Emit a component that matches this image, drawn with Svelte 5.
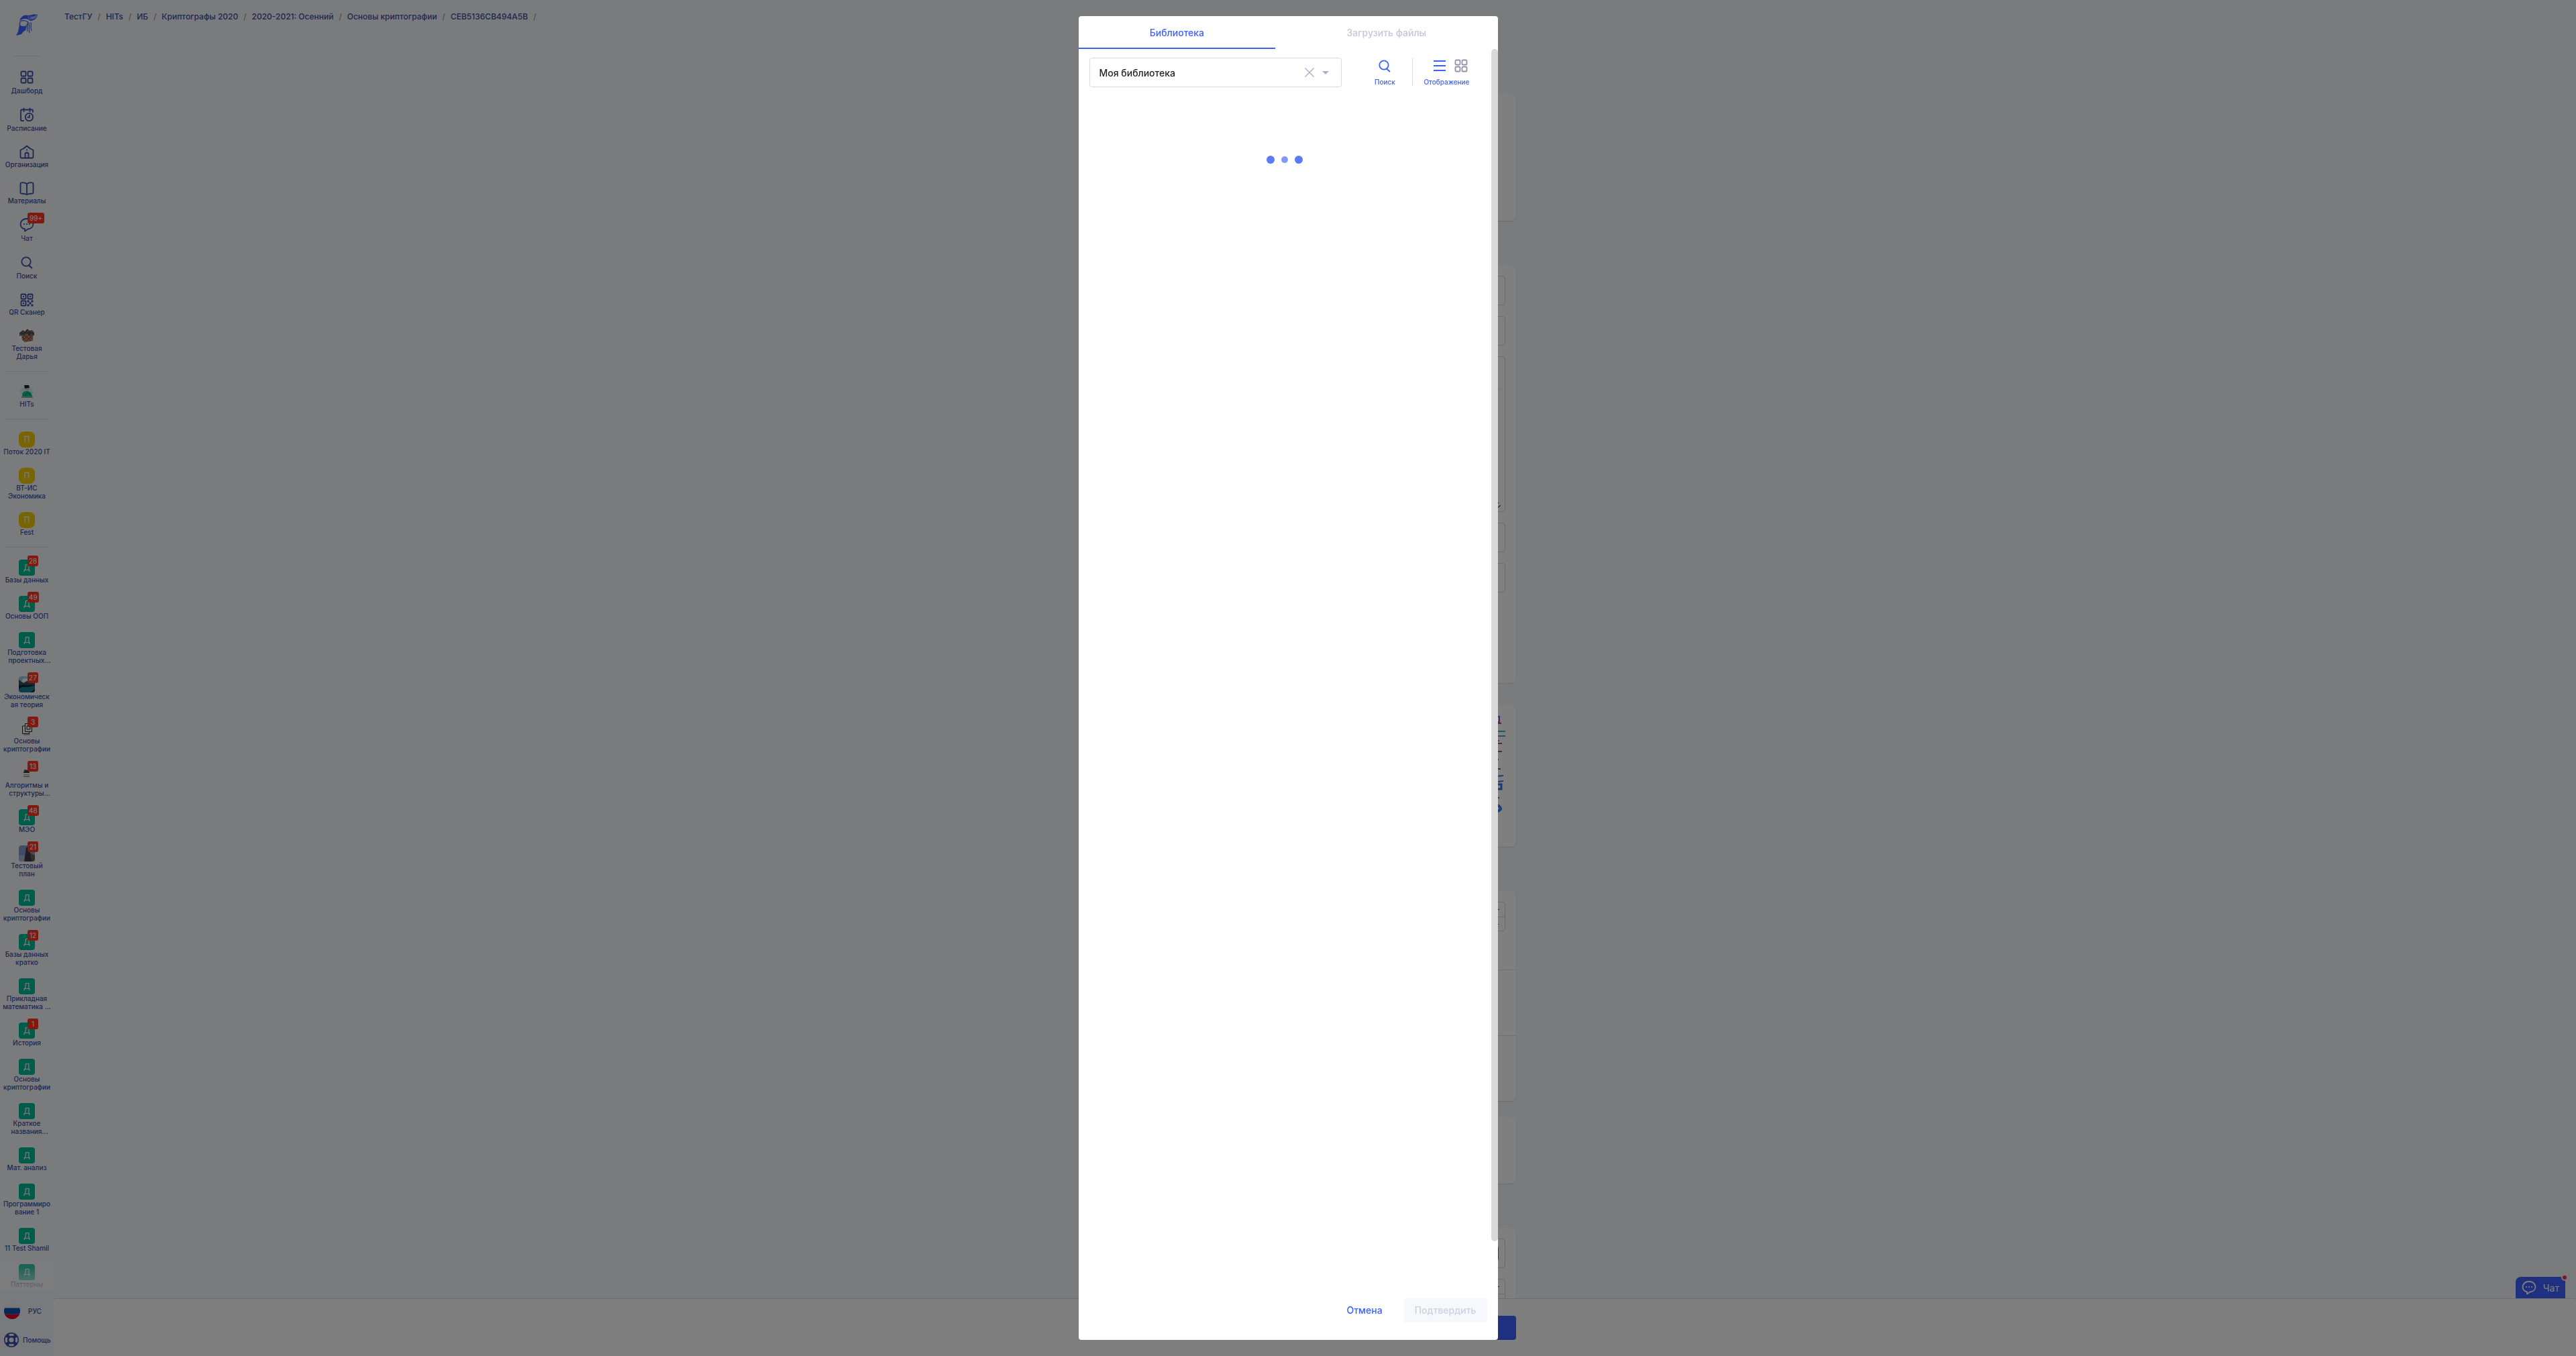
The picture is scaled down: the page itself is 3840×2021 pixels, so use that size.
<script>
  const crumbs = ['ТестГУ', 'HITs', 'ИБ', 'Криптографы 2020', '2020-2021: Осенний', 'Основы криптографии', 'CEB5136CB494A5B'];

  const menu = [
    { icon: 'grid', label: 'Дашборд', tall: true },
    { icon: 'calendar', label: 'Расписание', tall: true },
    { icon: 'home', label: 'Организация' },
    { icon: 'book', label: 'Материалы' },
    { icon: 'chat', label: 'Чат', badge: '99+', tall: true },
    { icon: 'search', label: 'Поиск', tall: true },
    { icon: 'qr', label: 'QR Сканер' },
    { icon: 'basket', label: 'Тестовая Дарья' }
  ];
  const orgs = [{ icon: 'person', label: 'HITs' }];
  const streams = [
    { letter: 'П', label: 'Поток 2020 IT' },
    { letter: 'П', label: 'ВТ-ИС Экономика' },
    { letter: 'П', label: 'Fest' }
  ];
  const courses = [
    { letter: 'Д', label: 'Базы данных', badge: '28' },
    { letter: 'Д', label: 'Основы ООП', badge: '49' },
    { letter: 'Д', label: 'Подготовка проектных', more: true },
    { icon: 'lake', label: 'Экономическая теория', badge: '27' },
    { icon: 'squares', label: 'Основы криптографии', badge: '3' },
    { icon: 'robot', label: 'Алгоритмы и структуры', more: true, badge: '13' },
    { letter: 'Д', label: 'МЭО', badge: '48' },
    { icon: 'tower', label: 'Тестовый план', badge: '21' },
    { letter: 'Д', label: 'Основы криптографии' },
    { letter: 'Д', label: 'Базы данных кратко', badge: '12' },
    { letter: 'Д', label: 'Прикладная математика\u00a0...' },
    { letter: 'Д', label: 'История', badge: '1' },
    { letter: 'Д', label: 'Основы криптографии' },
    { letter: 'Д', label: 'Краткое названия', more: true },
    { letter: 'Д', label: 'Мат. анализ' },
    { letter: 'Д', label: 'Программирование 1' },
    { letter: 'Д', label: '11 Test Shamil' },
    { letter: 'Д', label: 'Паттерны' }
  ];
  const groups = [
    { kind: 'plain', items: menu },
    { kind: 'plain', items: orgs },
    { kind: 'stream', items: streams },
    { kind: 'course', items: courses }
  ];
</script>

{#snippet icon(name)}
  {#if name === 'grid'}
    <svg class="line" width="20" height="20" viewBox="0 0 20 20"><rect x="1.5" y="1.5" width="7" height="7" rx="1.6" /><rect x="11.5" y="1.5" width="7" height="7" rx="1.6" /><rect x="1.5" y="11.5" width="7" height="7" rx="1.6" /><rect x="11.5" y="11.5" width="7" height="7" rx="1.6" /></svg>
  {:else if name === 'calendar'}
    <svg class="line" width="22" height="22" viewBox="0 0 22 22"><path d="M6 20H3.5A1.5 1.5 0 0 1 2 18.500V5a1.500 1.500 0 0 1 1.500-1.500h15A1.500 1.500 0 0 1 20 5v2M6.500 1.500v4.500M15.500 1.500v4.500" /><circle cx="14.500" cy="14.500" r="5.700" /><path d="M14.800 11.800v3h-2.500" /></svg>
  {:else if name === 'home'}
    <svg class="line" width="22" height="22" viewBox="0 0 22 22"><path d="M1.500 7.500 6 5.500l5-4 5 4 4.500 2V18a1.500 1.500 0 0 1-1.500 1.500H3A1.500 1.500 0 0 1 1.500 18ZM8.500 19v-5a2.500 2.500 0 0 1 5 0v5M10.800 7.500h.4" /></svg>
  {:else if name === 'book'}
    <svg class="line" width="22" height="22" viewBox="0 0 22 22"><path d="M11 4C8 2 4.500 2 3 2.300a1.500 1.500 0 0 0-1.500 1.500V17a1.500 1.500 0 0 0 1.500 1.500c3 0 5.500.3 8 1.500 2.500-1.200 5-1.500 8-1.500a1.500 1.500 0 0 0 1.500-1.500V3.800A1.500 1.500 0 0 0 19 2.300C17.500 2 14 2 11 4Zm0 0v16" /></svg>
  {:else if name === 'chat'}
    <svg class="line" width="22" height="22" viewBox="0 0 22 22"><path d="M8 17.300C4 16.500 1.500 13.500 1.500 10c0-4.700 4-8 9.500-8s9.500 3.300 9.500 8c0 4.200-3.600 7-8 7.500L8 20.500Z" /><path class="dots" d="M7 10h.1M11 10h.1M15 10h.1" /></svg>
  {:else if name === 'search'}
    <svg class="line" width="20" height="20" viewBox="0 0 20 20"><circle cx="9" cy="9" r="6.700" /><path d="m13 14.500 4.500 4" /></svg>
  {:else if name === 'qr'}
    <svg class="line" width="20" height="20" viewBox="0 0 20 20"><rect x="1.500" y="1.500" width="7" height="7" rx="1" /><rect x="11.500" y="1.500" width="7" height="7" rx="1" /><rect x="1.500" y="11.500" width="7" height="7" rx="1" /><path class="solid" d="M4 4h2v2H4zM14 4h2v2h-2zM4 14h2v2H4zM10.500 10.500h3v3h-3zM16.500 10.500h3v3h-3zM13.500 13.500h3v3h-3zM10.500 16.500h3v3h-3zM16.500 16.500h3v3h-3z" /></svg>
  {:else if name === 'basket'}
    <svg width="24" height="24" viewBox="0 0 24 24"><circle cx="12" cy="12" r="12" fill="#fff" /><path d="M4 10h18l-1 9-12 2-4-3Z" fill="#b98566" /><path d="m5 13 7 7m-3-9 9 8m-3-9 5 6M20 11l-9 9m4-10-9 8m3-8-4 5" stroke="#6b422d" /><path d="M1 7 6 3l3 2 4-4 3 3 4-1 3 4v4l-3-1-4 1-4-2-4 1-4 1-3 1Z" fill="#3f5b44" /><path d="M1 10h3M5 6h2m5-1h3m3 0h3m-3 4h2m-11 0h3" stroke="#b0507f" stroke-width="2" /></svg>
  {:else if name === 'person'}
    <svg width="24" height="24" viewBox="0 0 24 24"><path d="M3 8c3-5 15-6 18 2 1 5-2 8-6 8H7C3 16 1 12 3 8Z" fill="#cdeee9" /><path d="M5 19c0-7 3-8 7-8s7 2 8 8Z" fill="#00c08b" /><rect x="9" y="3" width="6" height="8" rx="3" fill="#edc9bd" /><path d="M8 2h7l1 4-7 1Z" fill="#19224b" /><path d="M4 20h17" stroke="#9aa" stroke-width="2" /><path d="m9 17 4-4 5 4" fill="none" stroke="#087e68" /></svg>
  {:else if name === 'lake'}
    <svg class="pic" width="24" height="24" viewBox="0 0 24 24"><path fill="#9fc8df" d="M0 0h24v24H0z" /><path fill="#eef4f7" d="M7 3h14v6H3z" /><path fill="#304d61" d="m0 5 7 5 5-3 5 2 7-6v12H0z" /><path fill="#1e7b8e" d="M0 15h24v9H0z" /><path fill="#112b37" d="M0 13h24l-9 3H5l-5 3zM17 24l7-5v5z" /></svg>
  {:else if name === 'squares'}
    <svg width="24" height="24" viewBox="0 0 24 24" fill="none" stroke="#25262b"><path d="M9 8H5.500v11.500h10V17M9.500 4.500h10v12h-10zM12 8h5v5h-5z" /><path d="M7 21h10" stroke="#8a8b90" /></svg>
  {:else if name === 'robot'}
    <svg class="pic" width="24" height="24" viewBox="0 0 24 24"><path fill="#f7f3f4" d="M0 0h24v24H0z" /><path d="M7 12c0-6 9-6 9 0Z" fill="#3b3b40" /><path d="M8 8h3m2 0h3" stroke="#bd4650" stroke-width="2" /><path d="M7 15h9M7 17.500h9" stroke="#77777c" /></svg>
  {:else if name === 'tower'}
    <svg class="pic" width="24" height="24" viewBox="0 0 24 24"><path fill="#7f9dca" d="M0 0h24v24H0z" /><path fill="#a7b4ce" d="M0 15h24v9H0z" /><path fill="#40394a" d="m11 3 4-1 5 22H8Z" /><path fill="#745747" d="m18 12 6 3v9h-5z" /></svg>
  {/if}
{/snippet}

<div class="app">
  <aside class="sidebar">
    <a class="logo" href="#home" aria-label="На главную">
      <svg width="34" height="34" viewBox="0 0 34 34" fill="#3d60ff"><path d="M6 11C8 4 14 1 20 3c4-1 8-3 13-1-1 5-5 9-11 9l-3-2c-4-2-8-1-11 1Z" /><path d="M7 12c4-2 8-2 12 1-1 3-2 5-4 6-3 1-6 1-8-1l-1-2 1-2Z" fill="none" stroke="#3d60ff" stroke-width="1.200" /><path d="m6 17 5 3 6-1-2 6-4 3-2 3-8 2 3-6 1-5Z" /><path d="M18 15c2 4-2 7 0 12M20 14c2 5-1 9 1 15M23 13c1 5-1 9 1 13" fill="none" stroke="#3d60ff" stroke-width="1.200" /><path d="M20 4c-2 3 0 5 4 4 4 0 6-2 8-5M22 5c3 1 6 0 9-2M22 7c4 0 6-1 8-2" fill="none" stroke="#f4f7fa" stroke-width=".8" /></svg>
    </a>
    <nav aria-label="Разделы">
      {#each groups as group}
        <div class="group {group.kind}">
          {#each group.items as item}
            <a class="item" href="#section">
              <span class="picture" class:tall={item.tall}>
                {#if item.letter}<span class="tile">{item.letter}</span>{:else}{@render icon(item.icon)}{/if}
                {#if item.badge}<span class="badge">{item.badge}</span>{/if}
              </span>
              <span class="label">{item.label}{#if item.more}<span class="more">...</span>{/if}</span>
            </a>
          {/each}
        </div>
      {/each}
    </nav>
    <div class="service">
      <button class="lang">
        <svg width="24" height="24" viewBox="0 0 24 24"><defs><clipPath id="round"><circle cx="12" cy="12" r="12" /></clipPath></defs><g clip-path="url(#round)"><path fill="#f0f0f0" d="M0 0h24v24H0z" /><path fill="#0052b4" d="M0 7.500h24v9H0z" /><path fill="#d80027" d="M0 16.500h24V24H0z" /></g></svg>
        <span>РУС</span>
      </button>
      <button class="help">
        <svg width="22" height="22" viewBox="0 0 22 22"><circle cx="11" cy="11" r="11" fill="#3d4ea3" /><g fill="none" stroke="#f1f4fa" stroke-width="3"><path d="M7.500 4a8 8 0 0 1 7 0M18 7.500a8 8 0 0 1 0 7M14.500 18a8 8 0 0 1-7 0M4 14.500a8 8 0 0 1 0-7" /></g><circle cx="11" cy="11" r="3.500" fill="#f1f4fa" /></svg>
        <span>Помощь</span>
      </button>
    </div>
  </aside>

  <main>
    <div class="scroll">
      <nav class="crumbs" aria-label="Навигация">
        {#each crumbs as crumb}<a href="#crumb">{crumb}</a><span>/</span>{/each}
      </nav>
      <div class="form">
        <section class="card intro"></section>
        <section class="card general">
          <input class="field" aria-label="Название" />
          <input class="field" aria-label="Короткое название" />
          <div class="field editor">
            <div class="tools"></div>
            <svg width="12" height="10" viewBox="0 0 12 10"><path d="M1 6 7 1M5 9l5-4" fill="none" stroke="#555" stroke-width="1.500" /></svg>
          </div>
          <input class="field" aria-label="Тип" />
          <input class="field" aria-label="Категория" />
        </section>
        <section class="card media">
          <svg width="60" height="148" viewBox="0 0 60 148" fill="none" stroke-width="2"><path d="M40 2h11v8H40" stroke="#a040e0" /><path d="M40 12h14M40 38h11M40 123h11" stroke="#ee3355" /><path d="M30 24h30M30 31h30" stroke="#3ab0cc" /><path d="M35 42h20M35 54h20M40 80h13" stroke="#a04a90" /><path d="M40 66h10M35 92l22-2M35 101l22-3" stroke="#4a70e0" /><path d="M40 110h14v-7H42" stroke="#2f78f0" stroke-width="3" /><path d="M40 132q13 2 13 8l-8 6" stroke="#2f80f0" stroke-width="4" /></svg>
        </section>
        <section class="card limits">
          <div class="row"><div class="field stepper"><input aria-label="Баллы" /><div class="steps"><button>+</button><button>-</button></div></div></div>
          <div class="row"></div>
          <div class="row"></div>
        </section>
        <section class="card extra"></section>
        <section class="card dates">
          <button class="field date" aria-label="Выбрать дату"><svg width="18" height="18" viewBox="0 0 18 18"><rect x="1" y="1" width="16" height="16" fill="none" stroke="#6d6d8c" stroke-width="2" /></svg></button>
          <div class="field stepper"><input aria-label="Попытки" /><div class="steps"><button>+</button><button aria-label="Меньше"></button></div></div>
        </section>
      </div>
      <button class="chat">{@render icon('chat')}<span>Чат</span><i></i></button>
    </div>
    <footer class="bar"><div class="actions"><button class="save" aria-label="Сохранить"></button></div></footer>
  </main>
</div>

<div class="overlay">
  <div class="modal" role="dialog" aria-modal="true" aria-label="Библиотека">
    <div class="tabs" role="tablist">
      <button role="tab" aria-selected="true" class="active">Библиотека</button>
      <button role="tab" aria-selected="false">Загрузить файлы</button>
    </div>
    <div class="body">
      <div class="content">
        <div class="toolbar">
          <div class="picker">
            <select aria-label="Библиотека"><option>Моя библиотека</option></select>
            <button aria-label="Очистить"><svg width="14" height="14" viewBox="0 0 14 14"><path d="m1 1 12 12M13 1 1 13" fill="none" stroke="#b1b5d0" stroke-width="1.700" stroke-linecap="round" /></svg></button>
            <svg width="10" height="5" viewBox="0 0 10 5"><path d="M0 0h10L5 5Z" fill="#a9aecb" /></svg>
          </div>
          <button class="tool find">{@render icon('search')}<span>Поиск</span></button>
          <div class="tool view">
            <div class="modes">
              <button aria-label="Список"><svg width="18" height="18" viewBox="0 0 18 18"><path d="M0 2h18M0 9h18M0 16h18" stroke="#3d60ff" stroke-width="2" /></svg></button>
              <button class="muted" aria-label="Плитка">{@render icon('grid')}</button>
            </div>
            <span>Отображение</span>
          </div>
        </div>
        <div class="loader" role="status" aria-label="Загрузка"><i></i><i></i><i></i></div>
      </div>
      <div class="track"><div class="thumb"></div></div>
    </div>
    <div class="footer">
      <button class="cancel">Отмена</button>
      <button class="confirm" disabled>Подтвердить</button>
    </div>
  </div>
</div>

<style>
  :global(body) { margin: 0; overflow: hidden; font-family: Inter, "Liberation Sans", sans-serif; }
  .app, .app *, .overlay, .overlay * { box-sizing: border-box; }
  button, input, select { font: inherit; border: 0; padding: 0; margin: 0; background: none; color: inherit; }
  svg { display: block; flex: none; }
  a { text-decoration: none; color: inherit; }
  .line { fill: none; stroke: currentColor; stroke-width: 1.800; stroke-linecap: round; stroke-linejoin: round; }
  .line .solid { fill: currentColor; stroke: none; }
  .line .dots { stroke-width: 2; }

  .app { display: flex; height: 100vh; background: #f4f7fa; }

  .sidebar { display: flex; flex-direction: column; flex: none; width: 80px; background: #f4f7fa; color: #3d4ea3; }
  .logo { display: flex; justify-content: center; height: 84px; flex: none; margin: 0 20px; padding-top: 20px; border-bottom: 1px solid #dcdde1; }
  .sidebar nav { position: relative; flex: 1; min-height: 0; overflow: hidden; padding-top: 1px; }
  .sidebar nav::after { content: ""; position: absolute; left: 0; right: 0; bottom: 0; height: 45px; background: linear-gradient(rgba(250, 250, 250, .1), rgba(250, 250, 250, .85)); }
  .group { display: flex; flex-direction: column; gap: 18px; margin: 0 8px; padding: 18px 0 16px; border-bottom: 1px solid #dcdde1; }
  .item { display: flex; flex-direction: column; align-items: center; margin: 0 -4px; }
  .picture { position: relative; display: flex; align-items: center; justify-content: center; width: 24px; height: 24px; }
  .picture.tall { height: 26px; padding-bottom: 2px; }
  .pic { border-radius: 4px; }
  .tile { display: flex; align-items: center; justify-content: center; width: 24px; height: 24px; border-radius: 4px; background: #00b894; color: #fff; font-size: 12px; line-height: 24px; }
  .stream .tile { border-radius: 8px; background: #f0c800; }
  .badge { position: absolute; left: 13px; top: -6px; min-width: 16px; height: 16px; padding: 0 2px; border-radius: 3px; background: #ff3420; color: #fff; font-size: 10px; line-height: 16px; text-align: center; }
  .tall .badge { padding: 0 3px; }
  .label { width: 72px; overflow-wrap: anywhere; font-size: 10px; font-weight: 500; line-height: 12px; text-align: center; }
  .more { margin-right: -8px; }
  .service { display: flex; flex-direction: column; flex: none; gap: 19px; height: 96px; padding: 17px 0 0 6px; background: #f1f4fa; }
  .service button { display: flex; align-items: center; height: 24px; color: #3d4ea3; font-size: 10px; font-weight: 500; }
  .lang { gap: 12px; }
  .help { gap: 6px; }

  main { display: flex; flex-direction: column; flex: 1; min-width: 0; }
  .scroll { position: relative; flex: 1; min-height: 0; overflow: hidden; }
  .crumbs { display: flex; gap: 8px; padding: 16px; height: 139px; font-size: 12px; font-weight: 500; line-height: 18px; color: #3d4ea3; }
  .crumbs span { color: #8a8a8a; font-weight: 400; }
  .form { display: flex; flex-direction: column; max-width: 600px; margin: 0 auto; }
  .card { flex: none; display: flex; flex-direction: column; gap: 16px; padding: 16px; border-radius: 8px; background: #fff; box-shadow: 0 1px 2px rgba(0, 0, 0, .12); }
  .field { flex: none; width: 100%; height: 44px; border: 1px solid #d4d5d8; border-radius: 4px; }
  .intro { min-height: 190px; margin-bottom: 66px; }
  .general { min-height: 623px; margin-bottom: 32px; }
  .media { min-height: 212px; margin-bottom: 66px; align-items: flex-end; }
  .limits { padding: 0; gap: 0; margin-bottom: 24px; }
  .extra { min-height: 99px; margin-bottom: 66px; }
  .row { min-height: 98px; border-top: 1px solid #e2e2e2; padding: 16px; }
  .row:first-child { min-height: 117px; border-top: 0; }
  .editor { display: flex; flex-direction: column; justify-content: space-between; align-items: flex-end; height: 232px; padding: 0 4px 4px 0; }
  .tools { align-self: stretch; height: 48px; border-bottom: 1px solid #eee; }
  .date { display: flex; align-items: center; justify-content: flex-end; padding-right: 9px; }
  .stepper { display: flex; }
  .stepper input { flex: 1; min-width: 0; }
  .steps { display: flex; flex-direction: column; width: 22px; }
  .steps button { flex: 1; font-size: 12px; line-height: 16px; color: #333; }
  .steps button + button { border-top: 1px solid #d4d5d8; }
  .chat { position: absolute; right: 16px; bottom: 0; display: flex; align-items: center; gap: 10px; height: 32px; padding: 0 9px; border-radius: 8px 0 0 0; background: #3d60ff; color: #fff; font-size: 14px; }
  .chat i { position: absolute; right: -4px; top: -4px; width: 10px; height: 10px; border: 2px solid #f4f7fa; border-radius: 50%; background: #ff2a2a; }
  .bar { flex: none; height: 86px; padding-top: 25px; border-top: 1px solid #d9dce1; border-radius: 4px 4px 0 0; background: #fff; }
  .actions { display: flex; justify-content: flex-end; max-width: 600px; margin: 0 auto; }
  .save { width: 120px; height: 36px; border-radius: 4px; background: #3d60ff; }

  .overlay { position: fixed; inset: 0; display: flex; justify-content: center; padding: 24px 0; background: rgba(0, 0, 0, .5); }
  .modal { display: flex; flex-direction: column; width: 625px; border-radius: 4px; background: #fff; color: #222; overflow: hidden; font-size: 14px; }
  .tabs { display: flex; flex: none; height: 49px; }
  .tabs button { flex: 1 1 auto; padding-top: 2px; border-bottom: 2px solid transparent; color: #c3c6dd; font-weight: 500; }
  .tabs .active { border-color: #3d60ff; color: #3d60ff; }
  .body { display: flex; flex: 1; min-height: 0; }
  .content { flex: 1; min-width: 0; padding: 13px 16px 0; }
  .toolbar { display: flex; align-items: flex-start; height: 44px; }
  .picker { display: flex; align-items: center; gap: 12px; width: 376px; height: 44px; padding: 0 18px 0 14px; border: 1px solid #d5dbe3; border-radius: 4px; }
  .picker select { flex: 1; height: 42px; appearance: none; font-weight: 500; }
  .tool { display: flex; flex-direction: column; align-items: center; gap: 8px; height: 42px; padding-top: 2px; font-size: 10px; font-weight: 500; line-height: 12px; color: #3d60ff; }
  .find { flex: 1; padding-left: 24px; }
  .view { padding: 2px 16px 0 16px; border-left: 1px solid #d5dbe3; }
  .modes { display: flex; align-items: center; height: 20px; gap: 13px; padding-left: 12px; }
  .muted { color: #9492ab; }
  .loader { display: flex; align-items: center; justify-content: center; gap: 10px; height: 12px; margin-top: 102px; }
  .loader i { width: 12px; height: 12px; border-radius: 50%; background: #5a7af8; }
  .loader i:nth-child(2) { width: 10px; height: 10px; background: #8299fb; }
  .track { flex: none; width: 10px; }
  .thumb { height: 97%; border-radius: 5px; background: #d9d9d9; }
  .footer { display: flex; flex: none; justify-content: flex-end; gap: 16px; padding: 30px 16px 26px; }
  .footer button { height: 36px; padding: 0 16px 2px; border-radius: 4px; font-weight: 500; }
  .cancel { color: #3d60ff; }
  .confirm { background: #f6f8fb; color: #cdd0e3; }
</style>
